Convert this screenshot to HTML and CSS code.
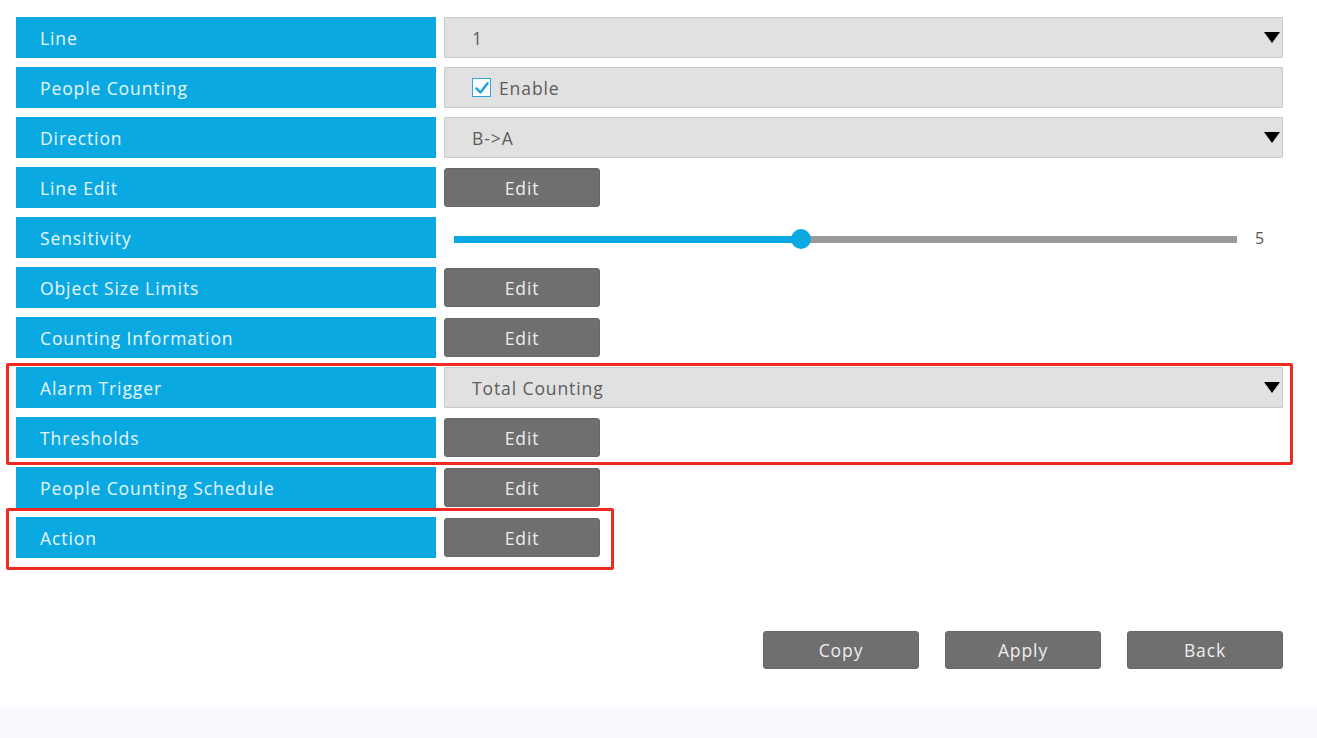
FILE: index.html
```html
<!DOCTYPE html>
<html lang="en">
<head>
<meta charset="UTF-8">
<title>People Counting</title>
<link rel="stylesheet" href="styles.css">
</head>
<body>
<div class="page">
  <!-- Settings form -->
  <div class="form">
    <div class="row">
      <div class="label">Line</div>
      <div class="select"><span>1</span><span class="arrow"></span></div>
    </div>
    <div class="row">
      <div class="label">People Counting</div>
      <div class="field">
        <span class="check">
          <svg viewBox="0 0 20 20" width="16" height="16"><path d="M3 10.5 L8 15.5 L17 4" fill="none" stroke="#1aa3e0" stroke-width="3" stroke-linecap="round" stroke-linejoin="round"/></svg>
        </span>
        <span>Enable</span>
      </div>
    </div>
    <div class="row">
      <div class="label">Direction</div>
      <div class="select"><span>B-&gt;A</span><span class="arrow"></span></div>
    </div>
    <div class="row">
      <div class="label">Line Edit</div>
      <div class="cell"><button class="btn">Edit</button></div>
    </div>
    <div class="row">
      <div class="label">Sensitivity</div>
      <div class="slider">
        <div class="track">
          <div class="track-fill" style="width: 44.3%"></div>
          <div class="knob" style="left: 44.3%"></div>
        </div>
        <span class="slider-value">5</span>
      </div>
    </div>
    <div class="row">
      <div class="label">Object Size Limits</div>
      <div class="cell"><button class="btn">Edit</button></div>
    </div>
    <div class="row">
      <div class="label">Counting Information</div>
      <div class="cell"><button class="btn">Edit</button></div>
    </div>
    <div class="row">
      <div class="label">Alarm Trigger</div>
      <div class="select"><span>Total Counting</span><span class="arrow"></span></div>
    </div>
    <div class="row">
      <div class="label">Thresholds</div>
      <div class="cell"><button class="btn">Edit</button></div>
    </div>
    <div class="row">
      <div class="label">People Counting Schedule</div>
      <div class="cell"><button class="btn">Edit</button></div>
    </div>
    <div class="row">
      <div class="label">Action</div>
      <div class="cell"><button class="btn">Edit</button></div>
    </div>

    <!-- red annotation frames -->
    <div class="mark mark-trigger"></div>
    <div class="mark mark-action"></div>
  </div>

  <!-- Bottom buttons -->
  <div class="actions">
    <button class="btn">Copy</button>
    <button class="btn">Apply</button>
    <button class="btn">Back</button>
  </div>
</div>
<div class="footer-strip"></div>
</body>
</html>
```

FILE: styles.css
```css
/* General */
body {
  margin: 0;
  background-color: #fff;
  font-family: "Open Sans", Arial, sans-serif;
  font-size: 17.5px;
  letter-spacing: 0.9px;
  color: #5a5a5a;
}
.page {
  height: 705px;
  padding: 17px 34px 0 16px;
  box-sizing: border-box;
}
/* Form rows */
.form {
  position: relative;
  display: flex;
  flex-direction: column;
  gap: 9px;
}
.row {
  display: grid;
  grid-template-columns: 420px 1fr;
  column-gap: 8px;
  height: 41px;
}
.label {
  background-color: #0ba9e2; /* blue */
  color: #e9f6fc;
  padding-left: 24px;
  display: flex;
  align-items: center;
}
.select,
.field {
  background-color: #e1e1e1;
  border: 1px solid #c9c9c9;
  border-radius: 1px;
  display: flex;
  align-items: center;
  padding-left: 27px;
  padding-right: 1px;
  color: #5c5c5c;
}
.select {
  justify-content: space-between;
}
.arrow {
  width: 0;
  height: 0;
  border-left: 8px solid transparent;
  border-right: 8px solid transparent;
  border-top: 11px solid #000;
  margin-right: 1px;
}
.check {
  width: 17px;
  height: 17px;
  border: 1.5px solid #2ba6e0;
  background-color: #fff;
  display: flex;
  align-items: center;
  justify-content: center;
  margin-right: 8px;
}
.cell {
  display: flex;
  align-items: center;
}
/* Buttons */
.btn {
  width: 156px;
  height: 39px;
  background-color: #6f6f6f;
  color: #eeeeee;
  border: 1px solid #666;
  border-radius: 3px;
  font-family: inherit;
  font-size: 17.5px;
  letter-spacing: 0.9px;
  padding: 0;
}
/* Slider */
.slider {
  display: flex;
  align-items: center;
  padding-left: 10px;
  padding-top: 4px;
}
.track {
  position: relative;
  width: 783px;
  height: 7px;
  background-color: #9a9a9a;
}
.track-fill {
  height: 100%;
  background-color: #0ba9e2;
}
.knob {
  position: absolute;
  top: -7px;
  width: 20px;
  height: 20px;
  margin-left: -10px;
  border-radius: 50%;
  background-color: #0ba9e2;
}
.slider-value {
  margin-left: 18px;
  color: #555;
  font-size: 16px;
  margin-top: -4px;
}
/* Annotation frames */
.mark {
  position: absolute;
  border: 3px solid #ee2a22;
  border-radius: 2px;
}
.mark-trigger {
  left: -10px;
  top: 346px;
  width: 1281px;
  height: 96px;
}
.mark-action {
  left: -10px;
  top: 491px;
  width: 602px;
  height: 56px;
}
/* Bottom */
.actions {
  display: flex;
  justify-content: flex-end;
  gap: 26px;
  margin-top: 73px;
}
.actions .btn {
  height: 38px;
}
.footer-strip {
  height: 33px;
  background-color: #f8fafd;
}
```
